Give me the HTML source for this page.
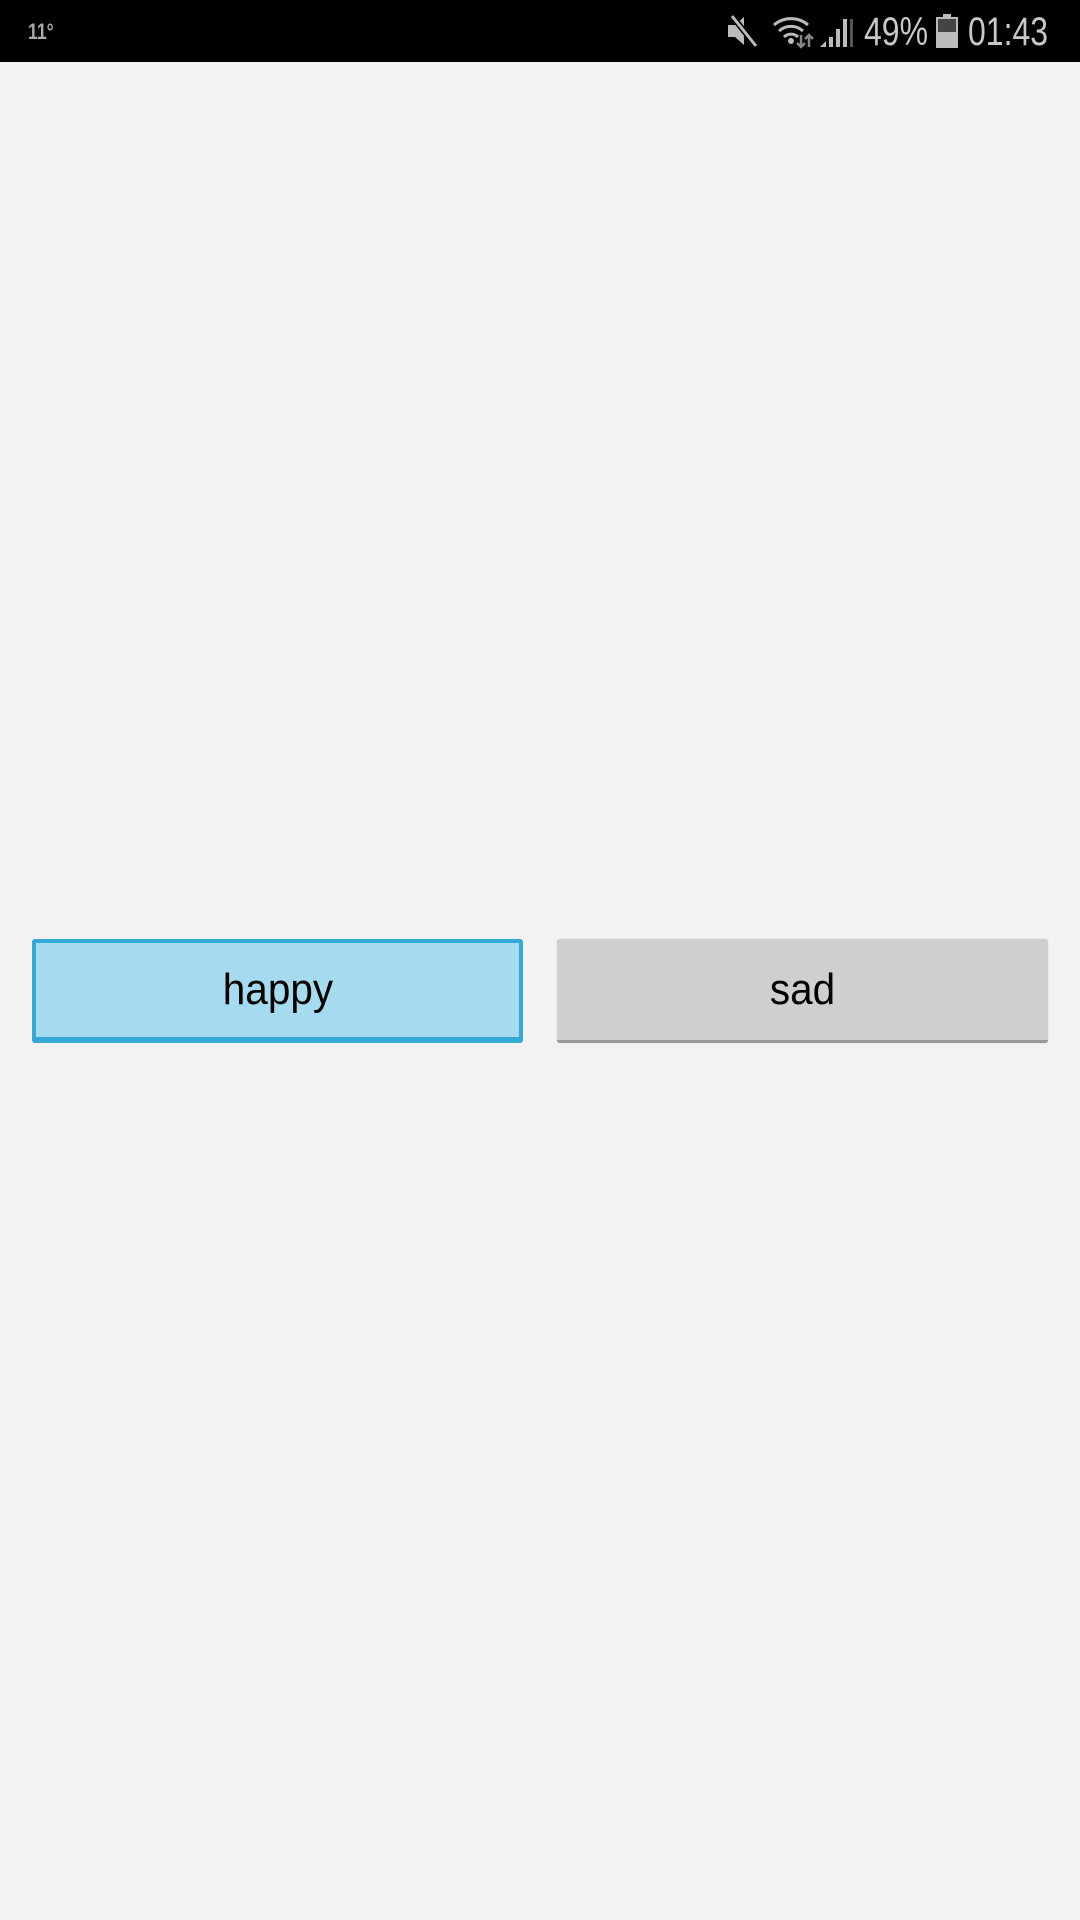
<!DOCTYPE html>
<html><head><style>
body{margin:0;width:1080px;height:1920px;background:#f2f2f2;position:relative;overflow:hidden;font-family:"Liberation Sans",sans-serif}
.sb{position:absolute;left:0;top:0;width:1080px;height:62px;background:#000;color:#c8c8c8}
.t{position:absolute;font-size:40px;top:10px;transform:scaleX(.8);transform-origin:left top;letter-spacing:0}
.btn{position:absolute;top:939px;height:104px;box-sizing:border-box;display:flex;align-items:center;justify-content:center;font-size:44px;color:#000;border-radius:3px}
.btn span{display:inline-block;transform:scaleX(.92)}
</style></head><body>
<div class="sb">
<div class="t" style="left:28px;top:19px;font-size:22px;font-weight:bold;color:#aaa">11°</div>
<svg style="position:absolute;left:726px;top:14px" width="36" height="34" viewBox="0 0 36 34"><path d="M2 11h7l9-8v28l-9-8H2z" fill="#bbb"/><path d="M6 2l24 30" stroke="#000" stroke-width="6"/><path d="M6 2l24 30" stroke="#bbb" stroke-width="3"/></svg>
<svg style="position:absolute;left:772px;top:15px" width="82" height="34" viewBox="0 0 82 34"><path d="M2 10a26 26 0 0 1 34 0M7 16a18 18 0 0 1 24 0M12 22a10 10 0 0 1 14 0" stroke="#bbb" stroke-width="3" fill="none"/><circle cx="19" cy="26" r="3" fill="#bbb"/><path d="M29 20v12M25 28l4 4 4-4M37 32V20M33 24l4-4 4 4" stroke="#888" stroke-width="2.5" fill="none"/><path d="M48 32l6-6v6zM57 32V22h4v10zM64 32V14h4v18zM71 32V4h4v28z" fill="#bbb"/><rect x="78" y="4" width="3" height="28" fill="#555"/></svg>
<div class="t" style="left:864px">49%</div>
<svg style="position:absolute;left:936px;top:14px" width="22" height="34" viewBox="0 0 22 34"><rect x="7" y="0" width="8" height="4" fill="#bbb"/><rect x="0" y="3" width="22" height="31" fill="#bbb"/><rect x="2" y="5" width="18" height="13" fill="#444"/></svg>
<div class="t" style="left:968px">01:43</div>
</div>
<div class="btn" style="left:32px;width:491px;background:#a6daee;border:4px solid #33aad6;border-bottom-width:6px"><span>happy</span></div>
<div class="btn" style="left:557px;width:491px;background:#cfcfcf;border-bottom:3px solid #999;box-shadow:0 0 1px #bbb"><span>sad</span></div>
</body></html>
